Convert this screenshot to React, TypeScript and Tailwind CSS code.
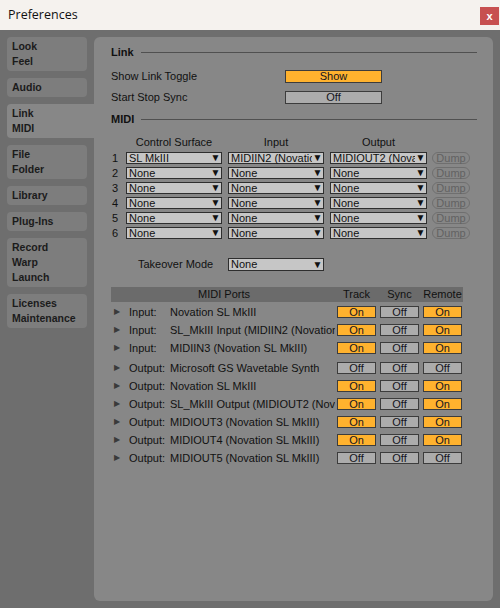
const tabs = [
  { lines: ['Look', 'Feel'] },
  { lines: ['Audio'] },
  { lines: ['Link', 'MIDI'], active: true },
  { lines: ['File', 'Folder'] },
  { lines: ['Library'] },
  { lines: ['Plug-Ins'] },
  { lines: ['Record', 'Warp', 'Launch'] },
  { lines: ['Licenses', 'Maintenance'] },
];

const surfaces = [
  ['SL MkIII', 'MIDIIN2 (Novation SL MkIII)', 'MIDIOUT2 (Novation SL MkIII)'],
  ['None', 'None', 'None'],
  ['None', 'None', 'None'],
  ['None', 'None', 'None'],
  ['None', 'None', 'None'],
  ['None', 'None', 'None'],
];

const ports = [
  { kind: 'Input:', name: 'Novation SL MkIII', v: [1, 0, 1] },
  { kind: 'Input:', name: 'SL_MkIII Input (MIDIIN2 (Novation SL MkIII))', v: [1, 0, 1] },
  { kind: 'Input:', name: 'MIDIIN3 (Novation SL MkIII)', v: [1, 0, 1] },
  { kind: 'Output:', name: 'Microsoft GS Wavetable Synth', v: [0, 0, 0], gap: true },
  { kind: 'Output:', name: 'Novation SL MkIII', v: [1, 0, 1] },
  { kind: 'Output:', name: 'SL_MkIII Output (MIDIOUT2 (Novation SL MkIII))', v: [1, 0, 1] },
  { kind: 'Output:', name: 'MIDIOUT3 (Novation SL MkIII)', v: [1, 0, 1] },
  { kind: 'Output:', name: 'MIDIOUT4 (Novation SL MkIII)', v: [1, 0, 1] },
  { kind: 'Output:', name: 'MIDIOUT5 (Novation SL MkIII)', v: [0, 0, 0] },
];

function Toggle({ on, label, className }: { on: boolean; label?: string; className: string }) {
  return (
    <div
      className={`${className} flex items-center justify-center border border-[#3c3c3c] text-[11px] leading-none text-[#141420] ${
        on ? 'bg-[#ffb22e]' : 'bg-[#acacac]'
      }`}
    >
      {label ?? (on ? 'On' : 'Off')}
    </div>
  );
}

function Dropdown({ value, className = 'w-[96px]' }: { value: string; className?: string }) {
  return (
    <div className={`${className} flex h-[12px] items-center border border-[#2e2e2e] bg-[#c6c6c6] pl-[2px] text-[11px] leading-none text-[#111]`}>
      <span className="flex-1 overflow-hidden whitespace-nowrap">{value}</span>
      <span className="w-[11px] shrink-0 bg-[#c6c6c6] text-center text-[10px] leading-none">▼</span>
    </div>
  );
}

function Section({ title }: { title: string }) {
  return (
    <div className="flex h-[14px] items-center">
      <span className="text-[11px] font-semibold text-[#111]">{title}</span>
      <div className="ml-[7px] h-px flex-1 bg-[#505050]" />
    </div>
  );
}

export default function App() {
  return (
    <div
      className="flex h-[608px] w-[500px] flex-col overflow-hidden bg-[#6e6e6e]"
      style={{ fontFamily: '"Liberation Sans", Arial, sans-serif' }}
    >
      <div className="flex h-[30px] items-start justify-between bg-[#f5f2ee]">
        <span className="pl-[8px] pt-[6px] text-[12.5px] text-[#111]" style={{ fontFamily: '"Open Sans", "Noto Sans", sans-serif' }}>
          Preferences
        </span>
        <div className="mr-[1px] mt-[7px] flex h-[18px] w-[19px] items-center justify-center bg-[#c75050] text-[11px] font-bold leading-none text-white">
          x
        </div>
      </div>

      <div className="flex flex-1 pt-[7px]">
        <div className="flex w-[94px] flex-col gap-[7px] pl-[7px]">
          {tabs.map((t) => (
            <div
              key={t.lines[0]}
              className={`flex flex-col rounded-l-[4px] py-[2px] pl-[5px] text-[10.5px] font-bold leading-[15px] text-[#1b1b1b] ${
                t.active ? 'w-[87px] bg-[#878787]' : 'w-[80px] rounded-r-[4px] bg-[#7d7d7d]'
              }`}
            >
              {t.lines.map((l) => (
                <span key={l}>{l}</span>
              ))}
            </div>
          ))}
        </div>

        <div className="mb-[7px] mr-[7px] flex flex-1 flex-col rounded-[6px] bg-[#878787] pl-[17px] pr-[16px] pt-[8px] text-[#111]">
          <Section title="Link" />
          <div className="mt-[11px] flex h-[13px] items-center text-[11px]">
            <span className="w-[174px]">Show Link Toggle</span>
            <Toggle on className="h-[13px] w-[97px]" label="Show" />
          </div>
          <div className="mt-[8px] flex h-[13px] items-center text-[11px]">
            <span className="w-[174px]">Start Stop Sync</span>
            <Toggle on={false} className="h-[13px] w-[97px]" label="Off" />
          </div>
          <div className="mt-[8px]">
            <Section title="MIDI" />
          </div>

          <div className="mt-[10px] flex h-[12px] items-center text-[11px] leading-none">
            <span className="w-[15px]" />
            <span className="w-[96px] text-center">Control Surface</span>
            <span className="ml-[6px] w-[96px] text-center">Input</span>
            <span className="ml-[6px] w-[97px] text-center">Output</span>
          </div>
          <div className="mt-[4px] flex flex-col gap-[3px]">
            {surfaces.map((r, i) => (
              <div key={i} className="flex h-[12px] items-center">
                <span className="w-[15px] pl-[1px] text-[11px] leading-none">{i + 1}</span>
                <Dropdown value={r[0]} />
                <Dropdown value={r[1]} className="ml-[6px] w-[96px]" />
                <Dropdown value={r[2]} className="ml-[6px] w-[97px]" />
                <div className="ml-[5px] flex h-[12px] w-[38px] items-center justify-center rounded-full border border-[#6f6f6f] text-[11px] leading-none text-[#626262]">
                  Dump
                </div>
              </div>
            ))}
          </div>

          <div className="mt-[19px] flex h-[13px] items-center text-[11px]">
            <span className="w-[117px] pl-[27px]">Takeover Mode</span>
            <Dropdown value="None" className="h-[13px] w-[96px]" />
          </div>

          <div className="mt-[16px] flex h-[15px] w-[352px] items-center bg-[#6b6b6b] text-[11px] leading-none">
            <span className="w-[226px] text-center">MIDI Ports</span>
            <span className="w-[39px] text-center">Track</span>
            <span className="ml-[4px] w-[39px] text-center">Sync</span>
            <span className="ml-[4px] w-[39px] text-center">Remote</span>
          </div>
          <div className="mt-[1px] flex w-[352px] flex-col">
            {ports.map((p) => (
              <div key={p.kind + p.name} className={`flex h-[18px] items-center text-[11px] leading-none ${p.gap ? 'mt-[2px]' : ''}`}>
                <span className="w-[18px] pl-[3px] text-[8px] text-[#3a3a3a]">▶</span>
                <span className="w-[206px] overflow-hidden whitespace-nowrap">
                  <span className="inline-block min-w-[41px] pr-[3px]">{p.kind}</span>
                  {p.name}
                </span>
                <Toggle on={!!p.v[0]} className="ml-[2px] h-[12px] w-[39px]" />
                <Toggle on={!!p.v[1]} className="ml-[4px] h-[12px] w-[39px]" />
                <Toggle on={!!p.v[2]} className="ml-[4px] h-[12px] w-[39px]" />
              </div>
            ))}
          </div>
        </div>
      </div>
    </div>
  );
}
